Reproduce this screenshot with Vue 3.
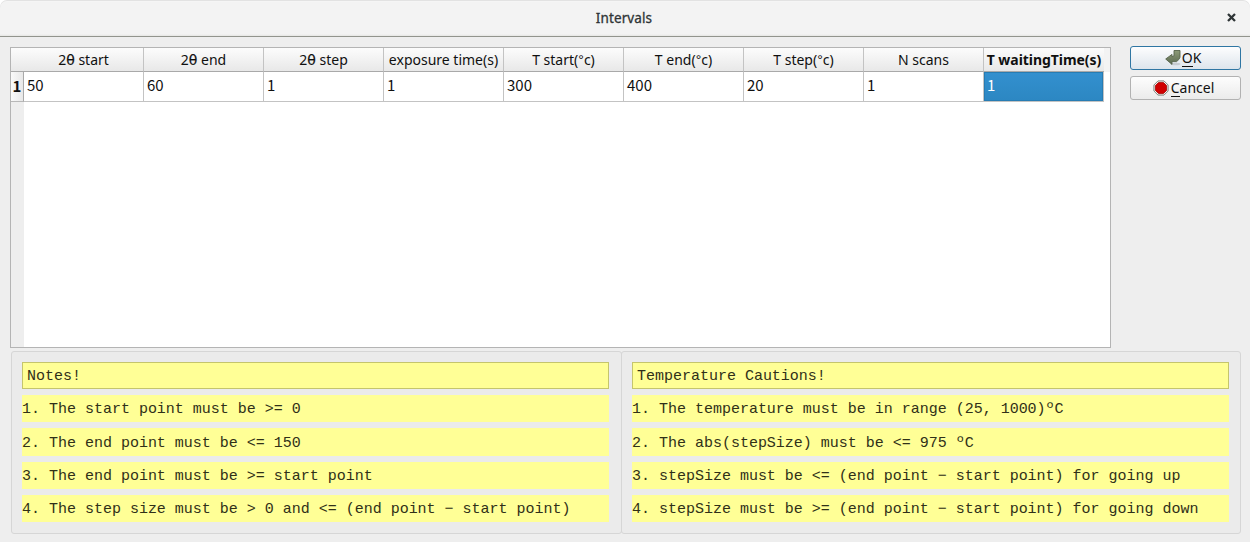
<script setup>
const columns = [
  { theta: true, label: ' start', value: '50' },
  { theta: true, label: ' end', value: '60' },
  { theta: true, label: ' step', value: '1' },
  { label: 'exposure time(s)', value: '1' },
  { label: 'T start(', celsius: true, value: '300' },
  { label: 'T end(', celsius: true, value: '400' },
  { label: 'T step(', celsius: true, value: '20' },
  { label: 'N scans', value: '1' },
  { label: 'T waitingTime(s)', value: '1', selected: true },
]

const panels = [
  {
    title: 'Notes!',
    lines: [
      '1. The start point must be >= 0',
      '2. The end point must be <= 150',
      '3. The end point must be >= start point',
      '4. The step size must be > 0 and <= (end point − start point)',
    ],
  },
  {
    title: 'Temperature Cautions!',
    lines: [
      '1. The temperature must be in range (25, 1000)ºC',
      '2. The abs(stepSize) must be <= 975 ºC',
      '3. stepSize must be <= (end point − start point) for going up',
      '4. stepSize must be >= (end point − start point) for going down',
    ],
  },
]
</script>

<template>
  <div class="window">
    <header class="titlebar">
      <span class="title">Intervals</span>
      <svg class="close" width="9" height="9" viewBox="0 0 9 9">
        <path d="M1 1 L8 8 M8 1 L1 8" stroke="#2e3436" stroke-width="2.3" fill="none" />
      </svg>
    </header>

    <main class="content">
      <section class="table">
        <div class="head">
          <div class="corner"></div>
          <div v-for="(c, i) in columns" :key="i" class="th" :class="{ active: c.selected }">
            <span class="label"><template v-if="c.theta">2<span class="theta">θ</span></template>{{ c.label }}<template v-if="c.celsius"><span class="degree">°</span>c)</template></span>
          </div>
        </div>
        <div class="row">
          <div class="rownum">1</div>
          <div v-for="(c, i) in columns" :key="i" class="td" :class="{ selected: c.selected }">{{ c.value }}</div>
        </div>
        <div class="rest"></div>
      </section>

      <aside class="buttons">
        <button class="btn default">
          <svg width="16" height="16" viewBox="0 0 16 16">
            <defs>
              <linearGradient id="arrow" x1="0" y1="0" x2="0" y2="1">
                <stop offset="0" stop-color="#8c9a78" />
                <stop offset="1" stop-color="#5c6b51" />
              </linearGradient>
            </defs>
            <ellipse cx="10.5" cy="14" rx="5" ry="1.3" fill="#000" opacity=".13" />
            <path d="M9 .5 H15 V7.2 Q14.6 9.4 11.6 11.6 H7 V14.4 L.7 9 L7 4.4 V6.6 H8 Q9 6.4 9 5 Z" fill="url(#arrow)" stroke="#566349" stroke-width=".9" />
          </svg>
          <span class="caption"><span class="key">O</span>K</span>
        </button>
        <button class="btn">
          <svg width="16" height="16" viewBox="0 0 16 16">
            <path d="M5 .9 H11 L15.1 5 V11 L11 15.1 H5 L.9 11 V5 Z" fill="#f3f3ef" stroke="#858780" stroke-width="1" />
            <path d="M5.6 2.4 H10.4 L13.6 5.6 V10.4 L10.4 13.6 H5.6 L2.4 10.4 V5.6 Z" fill="#d00000" stroke="#a40000" stroke-width=".8" />
          </svg>
          <span class="caption"><span class="key">C</span>ancel</span>
        </button>
      </aside>
    </main>

    <footer class="panels">
      <section v-for="p in panels" :key="p.title" class="panel">
        <div class="note heading">{{ p.title }}</div>
        <div v-for="l in p.lines" :key="l" class="note">{{ l }}</div>
      </section>
    </footer>
  </div>
</template>

<style>
body { margin: 0; background: #fff; }
</style>

<style scoped>
.window {
  width: 1250px;
  height: 542px;
  box-sizing: border-box;
  display: flex;
  flex-direction: column;
  overflow: hidden;
  background: #eeeeee;
  border-radius: 7px 7px 0 0;
  font-family: "Noto Sans", "Open Sans", sans-serif;
  font-size: 14px;
  color: #101010;
}
.titlebar {
  height: 37px;
  flex: none;
  box-sizing: border-box;
  display: grid;
  grid-template-columns: 28px 1fr 28px;
  align-items: center;
  background: linear-gradient(#fafafa 0, #f3f3f3 2px, #f3f3f3 34px, #e6e6e3 36px);
  border-bottom: 1px solid #92948d;
  border-radius: 7px 7px 0 0;
  box-shadow: inset 0 1px #e2e2e2;
}
.title {
  grid-column: 2;
  text-align: center;
  font-size: 13.5px;
  letter-spacing: 0.1px;
  color: #2e3436;
  padding-right: 2px;
  -webkit-text-stroke: 0.3px #2e3436;
}
.close { margin: 0 0 1px 5px; }
.content {
  display: flex;
  justify-content: space-between;
  align-items: flex-start;
  padding: 9px 9px 3px 10px;
}
.table {
  width: 1101px;
  height: 301px;
  margin-top: 1px;
  box-sizing: border-box;
  border: 1px solid #b4b4b4;
  background: #fff;
  display: flex;
  flex-direction: column;
}
.head {
  display: flex;
  height: 24px;
  flex: none;
  background: #f3f3f3;
}
.corner, .th {
  box-sizing: border-box;
  background: linear-gradient(#fcfcfc, #e8e8e8);
  border-bottom: 1px solid #a9a9a9;
}
.corner { width: 13px; }
.th {
  width: 120px;
  border-right: 1px solid #c3c3c3;
  display: flex;
  align-items: center;
  justify-content: center;
  white-space: pre;
  line-height: 22px;
}
.label { height: 22px; }
.th.active { font-weight: 700; border-right: 0; letter-spacing: -0.05px; }
.theta {
  font-family: "DejaVu Sans", sans-serif;
  -webkit-text-stroke: 0.2px #101010;
}
.degree { font-family: "Liberation Sans", sans-serif; }
.row { display: flex; height: 30px; flex: none; }
.rownum {
  width: 13px;
  box-sizing: border-box;
  border-right: 1px solid #a9a9a9;
  border-bottom: 1px solid #b8b8b8;
  background: linear-gradient(90deg, #fafafa, #e8e8e8);
  font-family: "Noto Sans CJK JP", sans-serif;
  font-size: 15px;
  font-weight: 700;
  text-align: center;
  line-height: 28px;
}
.td {
  width: 120px;
  box-sizing: border-box;
  border-right: 1px solid #c3c3c3;
  border-bottom: 1px solid #c3c3c3;
  padding-left: 3px;
  font-family: "Noto Sans CJK JP", sans-serif;
  font-size: 15px;
  line-height: 25px;
}
.td.selected {
  color: #fff;
  background: linear-gradient(#3390cf, #2c87c2);
  box-shadow: inset 0 0 0 1px #277cb3;
}
.rest { flex: 1; width: 13px; background: #eeeeee; }
.buttons {
  width: 111px;
  display: flex;
  flex-direction: column;
  gap: 6px;
}
.btn {
  height: 24px;
  padding: 0 4px 0 0;
  box-sizing: border-box;
  display: flex;
  align-items: center;
  justify-content: center;
  gap: 2px;
  border: 1px solid #b2b2b2;
  border-radius: 3px;
  background: linear-gradient(#fdfdfd, #ebebeb);
  font: inherit;
  color: inherit;
}
.btn.default {
  gap: 1px;
  padding-right: 5px;
  border-color: #2f76a3;
  background: linear-gradient(#fdfdfe, #dde5ec);
}
.caption { line-height: 20px; height: 20px; }
.key { display: inline-block; box-sizing: border-box; height: 19px; border-bottom: 1px solid #101010; }
.panels { display: flex; padding: 0 9px 0 11px; }
.panel {
  width: 611px;
  height: 183px;
  box-sizing: border-box;
  padding: 10px 12px 11px 10px;
  border: 1px solid #d6d6d6;
  border-radius: 3px;
  background: #ebebeb;
  display: grid;
  grid-template-rows: repeat(5, minmax(0, 1fr));
  row-gap: 6px;
}
.panel + .panel { width: 620px; margin-left: -1px; padding-right: 11px; }
.note {
  box-sizing: border-box;
  display: flex;
  align-items: center;
  padding-top: 3.3px;
  background: #ffff96;
  color: #303018;
  font-family: "Liberation Mono", monospace;
  font-size: 15px;
  letter-spacing: -0.01px;
  line-height: 20px;
  white-space: pre;
}
.heading { border: 1px solid #c5c56c; padding-left: 4px; padding-top: 2.6px; }
</style>
